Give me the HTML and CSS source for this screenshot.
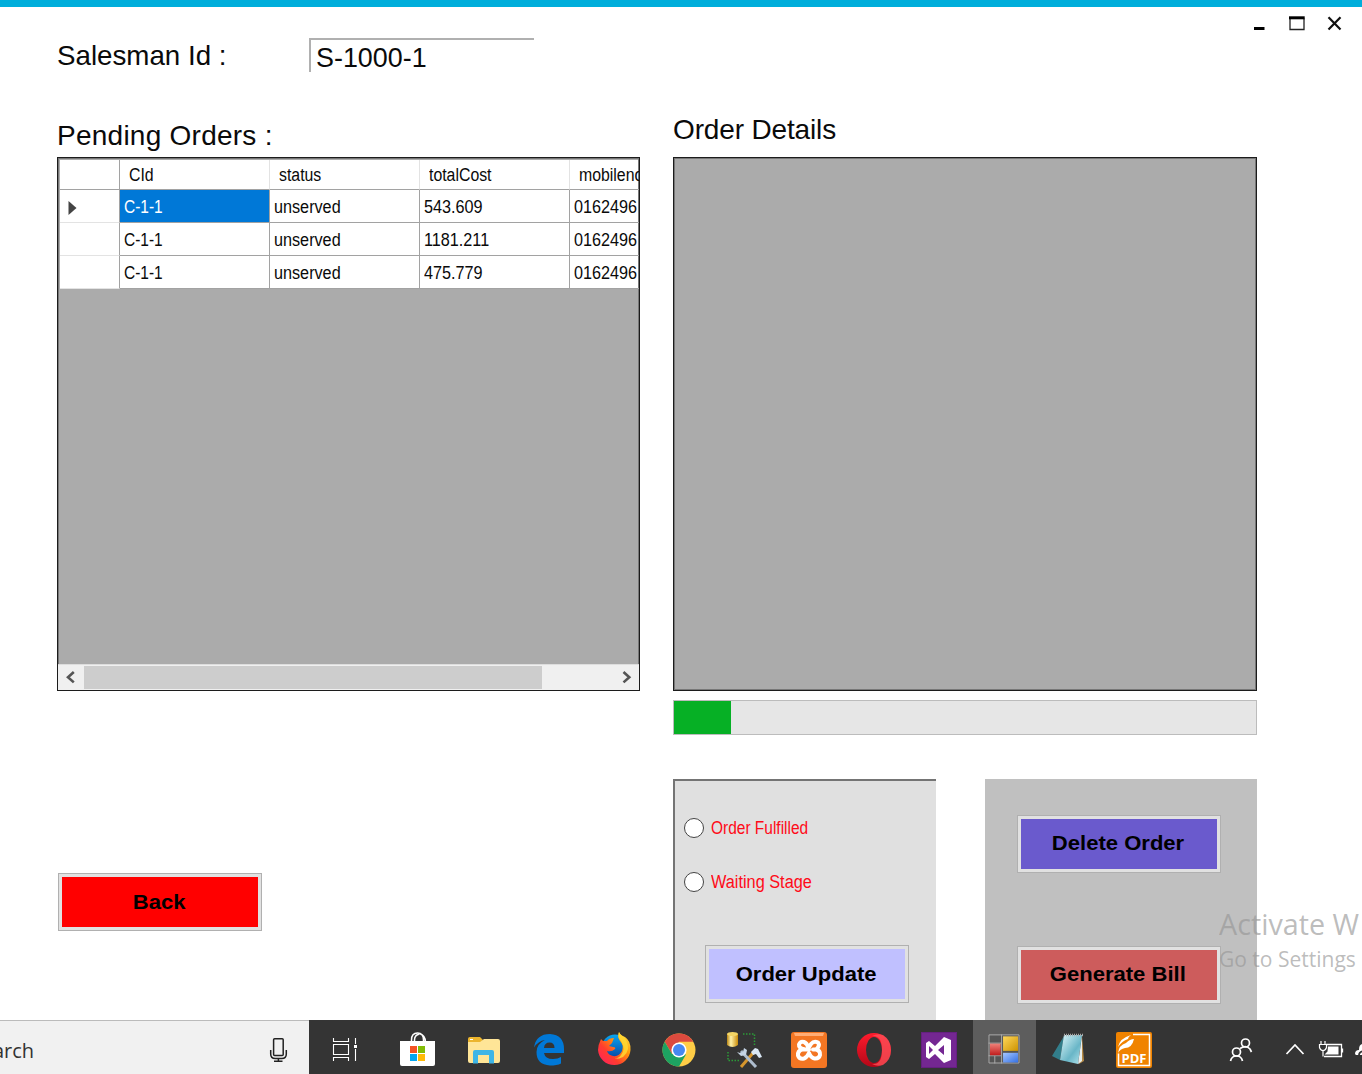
FILE: index.html
```html
<!DOCTYPE html>
<html lang="en">
<head>
<meta charset="utf-8">
<title>Salesman Orders</title>
<link rel="stylesheet" href="styles.css">
</head>
<body>
<div class="window">
  <header class="top">
    <label class="title id-label"><span>Salesman Id :</span></label>
    <div class="id-box"><span>S-1000-1</span></div>
    <svg class="controls" width="100" height="24" viewBox="1250 12 100 24">
      <path d="M1254 28.5h10.5" stroke="#000" stroke-width="3"/>
      <path d="M1290 18.5V29.5H1304V18.5" fill="none" stroke="#222" stroke-width="1.3"/>
      <path d="M1289 17.8H1304.7" stroke="#000" stroke-width="3"/>
      <path d="M1328.5 17.2L1340.5 29.6M1340.5 17.2L1328.5 29.6" stroke="#111" stroke-width="2.2"/>
    </svg>
  </header>
  <main class="columns">
    <section class="left">
      <h2 class="title pending">Pending Orders :</h2>
      <div class="grid">
        <div class="rows">
          <div class="row head"><div></div><div><span>CId</span></div><div><span>status</span></div><div><span>totalCost</span></div><div><span>mobileno</span></div></div>
          <div class="row"><div><svg class="marker" width="9" height="14" viewBox="0 0 9 14"><path d="M.5 0L8.5 7L.5 14z" fill="#444"/></svg></div><div class="selected"><span class="cid">C-1-1</span></div><div><span>unserved</span></div><div><span>543.609</span></div><div><span>0162496</span></div></div>
          <div class="row"><div></div><div><span class="cid">C-1-1</span></div><div><span>unserved</span></div><div><span>1181.211</span></div><div><span>0162496</span></div></div>
          <div class="row"><div></div><div><span class="cid">C-1-1</span></div><div><span>unserved</span></div><div><span>475.779</span></div><div><span>0162496</span></div></div>
        </div>
        <div class="scrollbar">
          <svg width="25" height="24" viewBox="0 0 25 24"><path d="M15.8 7L10 12.2L15.8 17.4" fill="none" stroke="#555" stroke-width="2.6"/></svg>
          <div class="thumb"></div>
          <svg width="25" height="24" viewBox="0 0 25 24"><path d="M9.500 7L15.3 12.2L9.500 17.4" fill="none" stroke="#555" stroke-width="2.6"/></svg>
        </div>
      </div>
      <button class="btn back"><span><b>Back</b></span></button>
    </section>
    <section class="right">
      <h2 class="title details">Order Details</h2>
      <div class="grid"></div>
      <div class="progress"><div class="bar"></div></div>
      <div class="panels">
        <div class="panel status">
          <div class="radio"><i></i><span class="fulfilled">Order Fulfilled</span></div>
          <div class="radio"><i></i><span class="waiting">Waiting Stage</span></div>
          <button class="btn update"><span><b>Order Update</b></span></button>
        </div>
        <div class="panel actions">
          <button class="btn delete"><span><b>Delete Order</b></span></button>
          <button class="btn bill"><span><b>Generate Bill</b></span></button>
        </div>
      </div>
    </section>
  </main>
  <div class="watermark"><p class="w1">Activate W</p><p class="w2">Go to Settings</p></div>
</div>
<footer class="taskbar">
  <div class="search"><span>arch</span>
    <svg width="24" height="30" viewBox="266 1035 24 30" fill="none" stroke="#222" stroke-width="1.5"><rect x="273.6" y="1038.8" width="9.6" height="16.6" rx="1"/><path d="M270.7 1050v4q0 4.5 4.5 4.5h6.6q4.5 0 4.5-4.5v-4M278.4 1058.5v3M274 1061.3h8.5"/></svg>
  </div>
  <svg width="77" height="54" viewBox="309 1020 77 54" fill="none" stroke="#fff" stroke-width="1.1"><path d="M333.5 1038v3.5h15v-3.5M333.5 1061v-3.5h15v3.5M333.5 1044.5h15v10h-15zM355.5 1038v6M355.5 1049v12"/><path d="M354 1045h3v3h-3z" fill="#fff" stroke="none"/></svg>
  <svg width="65" height="54" viewBox="386 1020 65 54"><g fill="none" stroke="#fff" stroke-width="1.5"><path d="M411.5 1042v-2q0-7 6-7t6 7v2M414.5 1042v-2q0-5 5-6M420 1034q5 1 5.5 8"/></g><path d="M400 1041h35v23q0 2-2 2h-31q-2 0-2-2z" fill="#fff"/><path d="M410 1046h7v7h-7z" fill="#f35325"/><path d="M418 1046h7v7h-7z" fill="#81bc06"/><path d="M410 1054h7v7h-7z" fill="#05a6f0"/><path d="M418 1054h7v7h-7z" fill="#ffba08"/></svg>
  <svg width="65" height="54" viewBox="451 1020 65 54"><path d="M468 1039q0-2 2-2h10l3 3l-2 3h-13z" fill="#ecb52e"/><path d="M470 1039.500h3" stroke="#fff"/><path d="M468 1042h12l4-3h14q2 0 2 2v20q0 2-2 2h-28q-2 0-2-2z" fill="#ffe597"/><path d="M473 1063.500v-11.500q0-2 2-2h17q2 0 2 2v11.500h-5v-8.500h-11v8.500z" fill="#3eb5e6"/></svg>
  <svg width="65" height="54" viewBox="516 1020 65 54"><path d="M534 1047.5Q536 1034 550 1034Q564 1035 564 1049v4h-20q1 6 9 6q5 0 8-2v6.500q-4 2-11 2q-13.500-1-13.500-13.500q0-8 8.500-12q-7 1-11 7.500zM544 1048h10.500q0-5.500-5-5.500t-5.500 5.500z" fill="#0078d7"/></svg>
  <svg width="65" height="54" viewBox="581 1020 65 54"><defs><linearGradient id="ff" x1="0" y1="1" x2="1" y2="0"><stop offset="0" stop-color="#ff1b67"/><stop offset=".35" stop-color="#ff3d2e"/><stop offset=".65" stop-color="#ff9a0b"/><stop offset="1" stop-color="#fff44f"/></linearGradient><linearGradient id="fb" x1="0" y1="0" x2="0" y2="1"><stop offset="0" stop-color="#08a5ef"/><stop offset="1" stop-color="#093a99"/></linearGradient></defs><circle cx="615" cy="1048" r="13.500" fill="url(#fb)"/><path d="M601 1039Q598 1045 598 1050A16.300 16.300 0 0 0 630.500 1050Q631 1041 625 1037Q620 1035 619 1032Q617 1037 620 1041Q624 1045 622 1051Q619 1057 613 1056Q608 1055 607 1051Q612 1052 615 1049Q616 1047 613 1047L609 1046L612 1043L614 1038Q609 1038 607 1041L603 1041Z" fill="url(#ff)"/><path d="M619 1032q-2 5 2 9q5 8 0 14q-2 3-7 4q12 0 14-10q0-7-4-12q-4-2-5-5z" fill="#ffdc35" opacity=".8"/></svg>
  <svg width="65" height="54" viewBox="646 1020 65 54"><circle cx="679" cy="1050" r="16.500" fill="#ffcd46"/><path d="M664.700 1041.700A16.500 16.500 0 0 1 693.300 1041.700H679L672 1054z" fill="#db4a3e"/><path d="M664.700 1041.700A16.500 16.500 0 0 0 679 1066.500L686 1054.500L672 1054z" fill="#1da261"/><circle cx="679" cy="1050" r="7.600" fill="#fff"/><circle cx="679" cy="1050" r="6" fill="#4688f1"/></svg>
  <svg width="65" height="54" viewBox="711 1020 65 54"><defs><linearGradient id="cy"><stop stop-color="#b78310"/><stop offset=".35" stop-color="#fff2aa"/><stop offset="1" stop-color="#c98b08"/></linearGradient></defs><path d="M727 1034v11q5.500 4 11 0v-11z" fill="url(#cy)"/><ellipse cx="732.500" cy="1034" rx="5.500" ry="2" fill="#f3d565"/><path d="M743 1034h11.500v11.500M728 1052v8.500h12" fill="none" stroke="#2b9b37" stroke-width="1.500" stroke-dasharray="1.500 1.500"/><path d="M741 1067l12-14" stroke="#d6962d" stroke-width="3"/><path d="M741 1051l15 16" stroke="#aebdce" stroke-width="3"/><path d="M737 1052l4 4l5-1l1-5l-3-2l-1 4l-3 1z" fill="#c5d4e5"/><path d="M751 1052l4-4l3 1l4 8l-3 1l-3-4l-3 1z" fill="#dae8f5"/></svg>
  <svg width="65" height="54" viewBox="776 1020 65 54"><rect x="791" y="1032" width="36" height="36" rx="3" fill="#f37623"/><path d="M794 1033h30l-1 3h-28z" fill="#ffad75"/><path d="M809 1049.500H802Q797.500 1051 798 1055.500Q799.500 1059.500 804 1058.500Q807 1057.500 809 1053Q811 1058 814.500 1058.500Q819 1059 820 1055Q820.500 1050.500 816 1049.500H813M809 1049.500L805.500 1049.500Q798.500 1048.500 799 1044.500Q800.500 1041 804 1042Q807 1043 808.500 1048L811 1044Q814 1040.500 818 1042.500Q820.500 1046 816 1049.500" fill="none" stroke="#fff" stroke-width="4" stroke-linejoin="round" stroke-linecap="round"/></svg>
  <svg width="65" height="54" viewBox="841 1020 65 54"><defs><linearGradient id="op" x1="0" y1="0" x2="0" y2="1"><stop stop-color="#ff1b2d"/><stop offset="1" stop-color="#b30718"/></linearGradient></defs><path fill-rule="evenodd" d="M857 1050a17 17 0 1 0 34 0a17 17 0 1 0-34 0zM866 1050a8 13 0 1 1 16 0a8 13 0 1 1-16 0z" fill="url(#op)"/><path d="M872 1036q5-3 11-1q8 5 8 15t-8 15q-6 2-11-1q10 1 10-14t-10-14z" fill="#ff5259" opacity=".75"/></svg>
  <svg width="65" height="54" viewBox="906 1020 65 54"><rect x="921.500" y="1032.500" width="35" height="35" fill="#742792" stroke="#652080"/><path fill-rule="evenodd" d="M944 1037l7 3v20l-7 3l-9-9l-6 5l-3-2v-14l3-2l6 5zM944 1045l-6 5l6 5zM929 1046v8l4-4z" fill="#fff"/></svg>
  <svg class="active" width="65" height="54" viewBox="971 1020 65 54"><defs><linearGradient id="y" x2="1" y2="1"><stop stop-color="#ffd75b"/><stop offset="1" stop-color="#cd9300"/></linearGradient><linearGradient id="r" x2="0" y2="1"><stop stop-color="#ee8179"/><stop offset="1" stop-color="#c11c1c"/></linearGradient><linearGradient id="b" x2="1" y2="1"><stop stop-color="#a5c6ff"/><stop offset="1" stop-color="#3470e4"/></linearGradient></defs><path d="M987.500 1034.500h31v29h-31zM1000.500 1034v30M987 1043h13M987 1056h13M993.500 1056v8" fill="#555" stroke="#aaa"/><path d="M1002 1036h15.500v15h-15.500z" fill="url(#y)"/><path d="M988.500 1043.500h11v12h-11z" fill="url(#r)"/><path d="M1002 1053h15.500v10h-15.500z" fill="url(#b)"/></svg>
  <svg width="65" height="54" viewBox="1036 1020 65 54"><defs><linearGradient id="np" x2="1" y2="1"><stop stop-color="#e0f7fa"/><stop offset=".6" stop-color="#69b6c7"/><stop offset="1" stop-color="#b4e4ed"/></linearGradient></defs><path d="M1082 1036l2 25l-5 3z" fill="#b58a46"/><path d="M1064 1036l-12 20l8 4z" fill="#327e8b"/><path d="M1064 1035h18l-4 29l-18-4z" fill="url(#np)"/><path d="M1082 1036v25l-4 3z" fill="#e8eeee"/><path d="M1064 1035h19" stroke="#aaa" stroke-width="2.500" stroke-dasharray="1 1"/></svg>
  <svg width="65" height="54" viewBox="1101 1020 65 54"><rect x="1116" y="1032" width="36" height="36" rx="2" fill="#f08300"/><path d="M1133 1034.500h16.500v31h-31v-12" fill="none" stroke="#fff" stroke-width="1.500"/><path d="M1118 1047q2-9 13-12q-3 2-3 4q-6 2-10 8z" fill="#fff"/><path d="M1118 1053q1-8 8-10q4-4 8-4q-2 9-9 9q-5 1-7 5z" fill="#fff"/><text x="1121.500" y="1063" textLength="25" lengthAdjust="spacingAndGlyphs" class="pdf">PDF</text></svg>
  <svg class="tray" width="196" height="54" viewBox="1166 1020 196 54" fill="none" stroke="#fff" stroke-width="1.700"><circle cx="1245.500" cy="1043" r="4"/><circle cx="1236.500" cy="1052" r="4"/><path d="M1240 1048.500q6-4 10 .5l1.500 3M1230.500 1061q1-5 6-5t6 5M1286.500 1054l8.500-9l8.500 9"/><path d="M1324 1056.500h17.500v-12h-15.500M1342.500 1048.500v4" stroke-width="1.300"/><path d="M1328 1046.500h10.500v8h-14l3-3z" fill="#fff" stroke="none"/><path d="M1321 1041v3M1325 1041v3M1319.500 1044.500h7v3q-1 3-3.500 3t-3.500-3zM1323 1050.500v6" stroke-width="1.200"/><path d="M1355 1054q0-4 4-4q0-6 4-6v11h-7z" fill="#fff" stroke="none"/><path d="M1359 1055q0-3 4-4" stroke="#333"/></svg>
</footer>
</body>
</html>
```
FILE: styles.css
```css
* { box-sizing: border-box; }
body { margin: 0; width: 1362px; height: 1074px; overflow: hidden; background: #fff; color: #0a0a0a; font-family: "Liberation Sans", Arial, sans-serif; }
span { display: inline-block; white-space: nowrap; }
svg { display: block; flex: none; }
.window { position: relative; height: 1020px; border-top: 7px solid #00aedb; overflow: hidden; }
.top { display: flex; height: 101px; padding-left: 57px; align-items: flex-start; }
.title { margin: 0; font-size: 28px; line-height: 32px; font-weight: 400; white-space: nowrap; }
.id-label { width: 252px; padding-top: 33px; }
.id-label span { transform: scaleX(.99); transform-origin: left; }
.id-box { width: 225px; height: 34px; margin-top: 31px; border: solid #b0b0b0; border-width: 2px 0 0 2px; padding: 1px 0 0 5px; font-size: 28px; line-height: 34px; }
.id-box span { transform: scaleX(.96); transform-origin: left; }
.controls { margin: 5px 12px 0 auto; }
.columns { display: flex; gap: 33px; padding-left: 57px; }
.left { width: 583px; }
.right { width: 584px; }
.pending { height: 49px; padding-top: 12px; letter-spacing: .25px; }
.details { height: 49px; padding-top: 6px; letter-spacing: -.15px; }
.grid { width: 584px; height: 534px; border: 1px solid #1c1c1c; box-shadow: inset 0 0 0 1px #777; background: #ababab; display: flex; flex-direction: column; justify-content: space-between; overflow: hidden; }
.left .grid { width: 583px; }
.rows { width: 580px; padding: 2px 0 0 2px; }
.row { display: grid; grid-template-columns: 60px 150px 150px 150px 69px; grid-template-rows: 33px; height: 33px; background: #fff; font-size: 18px; line-height: 34px; }
.row > div { height: 100%; min-height: 0; border-right: 1px solid #a2a2a2; border-bottom: 1px solid #a2a2a2; padding-left: 4px; }
.row > div:last-child { border-right: 0; }
.row > div:first-child { padding: 11px 0 0 8px; border-bottom-color: #e3e3e3; }
.row > div.selected { background: #0078d7; color: #fff; }
.row span { transform: scaleX(.9); transform-origin: left; }
.row .cid { transform: scaleX(.86); }
.row.head { height: 30px; grid-template-rows: 30px; }
.row.head > div { border-right-color: #e3e3e3; padding-left: 9px; line-height: 30px; }
.row.head > div:first-child { border-right-color: #a2a2a2; border-bottom-color: #a2a2a2; }
.row.head span { transform: scaleX(.88); }
.scrollbar { display: flex; height: 26px; border-top: 1px solid #ddd; background: #f0f0f0; }
.scrollbar .thumb { width: 458px; margin: 1px auto 1px 1px; background: #cdcdcd; }
.progress { width: 584px; height: 35px; margin-top: 9px; border: 1px solid #bcbcbc; background: #e6e6e6; }
.bar { width: 57px; height: 33px; background: #06b025; }
.panels { display: flex; gap: 50px; margin-top: 44px; }
.panel { height: 250px; }
.status { width: 263px; background: #e0e0e0; border: solid #747474; border-width: 2px 0 0 2px; padding: 36px 0 0 9px; }
.actions { width: 272px; background: #c0c0c0; padding: 36px 0 0 32px; }
.panels { gap: 49px; }
.radio { display: flex; height: 22px; margin-bottom: 32px; gap: 7px; align-items: center; color: #ff0a18; font-size: 18px; }
.radio i { width: 20px; height: 20px; border: 1.500px solid #444; border-radius: 50%; background: #fff; }
.radio span { transform-origin: left; }
.fulfilled { transform: scaleX(.86); }
.waiting { transform: scaleX(.905); }
.btn { display: block; width: 204px; height: 58px; border: 1px solid #b0b0b0; padding: 3px; background: #e1e1e1; color: #000; font: bold 21px/51px "Liberation Sans", Arial, sans-serif; }
.btn span { display: block; height: 50px; text-align: center; line-height: 49px; }
.btn b { display: inline-block; transform: translateX(-1px) scaleX(1.05); }
.back { margin: 182px 0 0 1px; }
.back span { background: #f00; }
.update { margin: 0 0 0 21px; }
.status .radio:nth-child(2) { margin-bottom: 52px; }
.update span { background: #c0c0ff; }
.delete span { background: #6a5acd; }
.bill { margin-top: 73px; }
.actions .btn span { line-height: 48px; }
.bill span { background: #cd5c5c; }
.watermark { position: absolute; left: 1219px; top: 895px; color: rgba(150, 150, 150, .64); font-family: "Open Sans", "Noto Sans", sans-serif; white-space: nowrap; }
.watermark p { margin: 0; transform-origin: left; }
.w1 { font-size: 29px; line-height: 44px; transform: scaleX(.99); }
.w2 { font-size: 21px; line-height: 26px; }
.taskbar { display: flex; height: 54px; background: #343434; }
.search { display: flex; justify-content: space-between; align-items: center; width: 309px; padding: 5px 19px 0 0; border-top: 1px solid #bbb; background: #f1f1f1; color: #333; font: 20px "Open Sans", "Noto Sans", sans-serif; }
.search span { margin-left: -7px; }
.active { background: #5d5d5d; border-left: 2px solid #343434; }
.pdf { fill: #fff; stroke: none; font: bold 12px "Open Sans", sans-serif; }
```
